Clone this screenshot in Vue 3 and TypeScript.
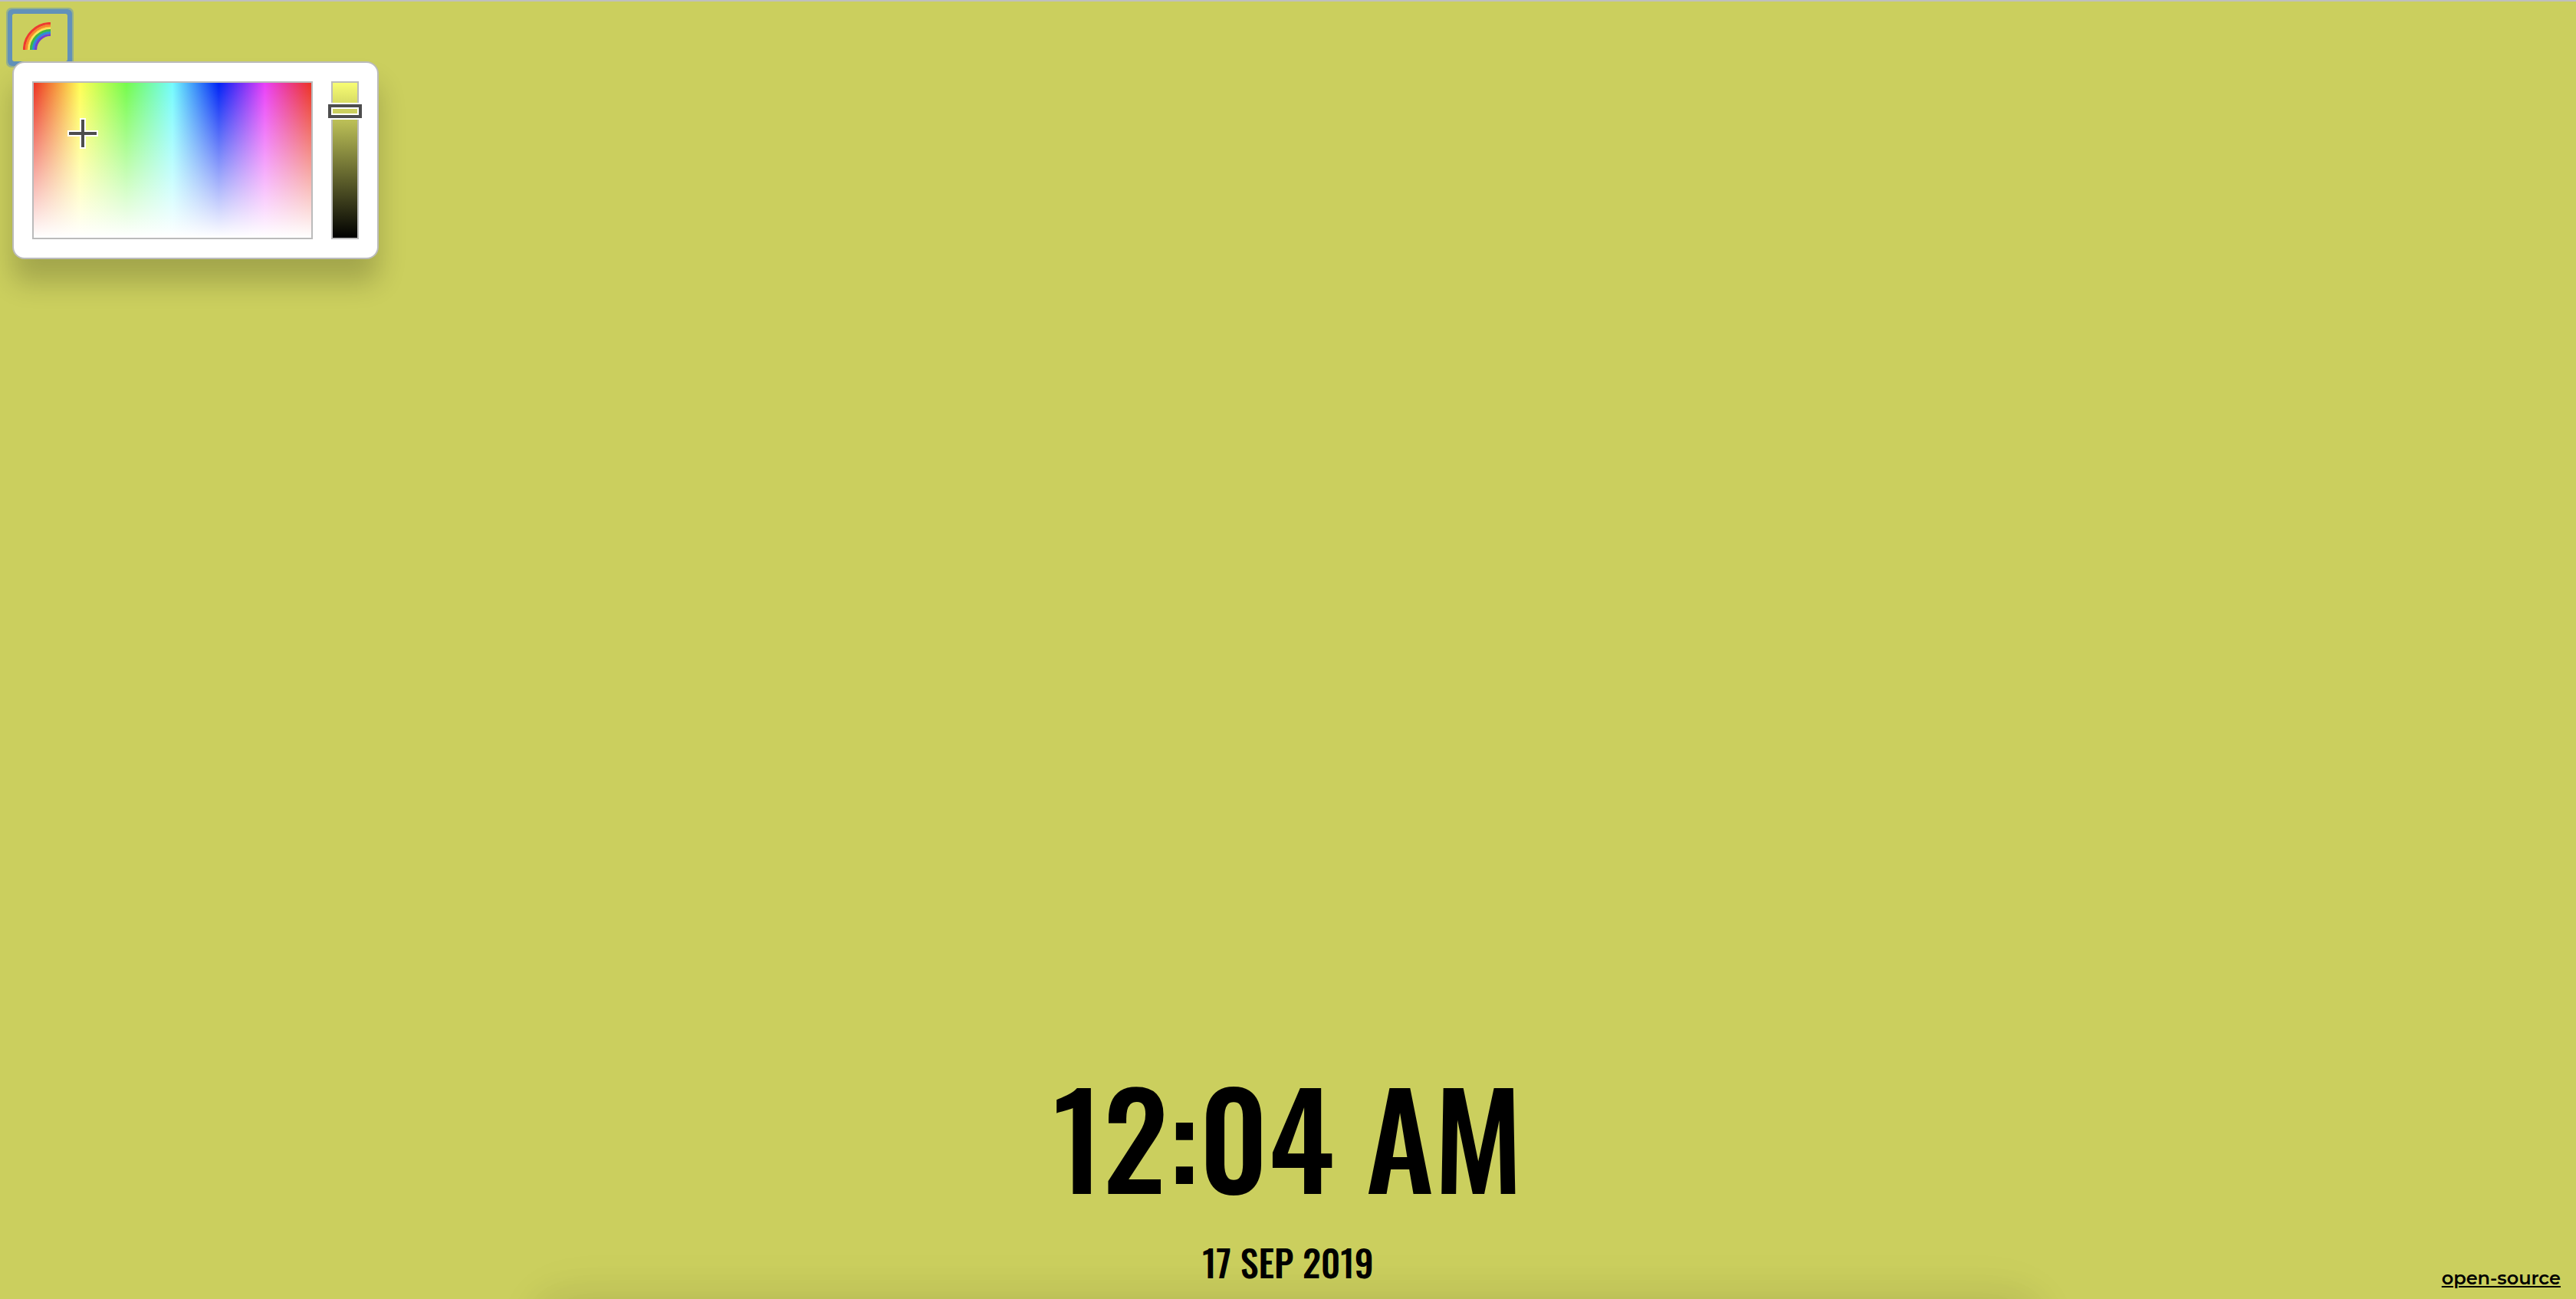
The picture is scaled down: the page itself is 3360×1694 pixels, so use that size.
<script setup lang="ts">
import { ref } from 'vue'

const time = ref('12:04 AM')
const date = ref('17 SEP 2019')
const brightness = ref(85)
const pickerOpen = ref(true)

const bands = [
  { r: 34.5, color: '#ee3a30' },
  { r: 31.5, color: '#f7852f' },
  { r: 28.5, color: '#fbe35c' },
  { r: 25.5, color: '#3fb540' },
  { r: 22.5, color: '#2f86e0' },
  { r: 19.5, color: '#7340cc' },
]
</script>

<template>
  <main class="page">
    <header class="toolbar">
      <button
        class="toggle"
        type="button"
        aria-label="Background colour"
        :aria-expanded="pickerOpen"
        @click="pickerOpen = !pickerOpen"
      >
        <svg class="rainbow" viewBox="0 0 36 36" aria-hidden="true">
          <circle
            v-for="band in bands"
            :key="band.r"
            cx="36"
            cy="36"
            :r="band.r"
            fill="none"
            :stroke="band.color"
            stroke-width="3.2"
          />
          <circle cx="36" cy="36" r="30" fill="none" stroke="#fbb534" stroke-width="1" />
          <circle cx="36" cy="36" r="24" fill="none" stroke="#2fa89a" stroke-width="1" />
        </svg>
      </button>

      <section v-if="pickerOpen" class="picker" aria-label="Colour picker">
        <div class="palette">
          <svg class="cross" viewBox="0 0 40 40" aria-hidden="true">
            <path d="M16 0h8v16h16v8H24v16h-8V24H0v-8h16z" fill="#fff" />
            <path d="M18 2h4v16h16v4H22v16h-4V22H2v-4h16z" fill="#4d4d4d" />
          </svg>
        </div>
        <div class="value">
          <input
            v-model.number="brightness"
            class="range"
            type="range"
            min="0"
            max="100"
            aria-label="Brightness"
          />
        </div>
      </section>
    </header>

    <footer class="bottom">
      <div class="clock">
        <h1 class="time">{{ time }}</h1>
        <p class="date">{{ date }}</p>
      </div>
      <a class="source" href="#source">open-source</a>
    </footer>
    <div class="shade"></div>
  </main>
</template>

<style>
body {
  background: #cbcf5e;
}
</style>

<style scoped>
.page {
  position: relative;
  box-sizing: border-box;
  display: flex;
  flex-direction: column;
  justify-content: space-between;
  min-height: 100vh;
  overflow: hidden;
  border-top: 2px solid #bfbfbf;
  background: #cbcf5e;
  color: #000;
}

.toolbar {
  position: relative;
  display: flex;
  padding: 16px;
}

.toggle {
  display: flex;
  align-items: flex-start;
  box-sizing: border-box;
  width: 72px;
  height: 62px;
  margin: 0;
  padding: 11px 14px;
  border: 0;
  border-radius: 2px;
  background: transparent;
  box-shadow:
    0 0 0 1px rgba(98, 145, 185, 0.6),
    0 0 0 6px #6291b9,
    0 0 0 8px rgba(98, 145, 185, 0.5);
}

.rainbow {
  display: block;
  width: 36px;
  height: 36px;
}

.picker {
  position: absolute;
  top: 78px;
  left: 16px;
  z-index: 2;
  display: flex;
  gap: 24px;
  padding: 24px;
  border: 2px solid #bbb;
  border-radius: 16px;
  background: #fff;
  box-shadow: 0 30px 36px rgba(0, 0, 0, 0.2);
}

.palette {
  position: relative;
  width: 362px;
  height: 202px;
  border: 2px solid #bbb;
  background:
    linear-gradient(to bottom, rgba(255, 255, 255, 0), #fff),
    linear-gradient(
      to right,
      #ec3323,
      #fffe54,
      #75fb4c,
      #73fbfd,
      #0023f5,
      #ea3ff7,
      #ec3323
    );
}

.cross {
  position: absolute;
  top: 46px;
  left: 44px;
  width: 40px;
  height: 40px;
}

.value {
  position: relative;
  width: 32px;
  height: 202px;
  border: 2px solid #bbb;
  background: linear-gradient(to bottom, #f8fd73, #000);
}

.range {
  position: absolute;
  top: 0;
  left: -6px;
  width: 44px;
  height: 202px;
  margin: 0;
  appearance: none;
  background: transparent;
  writing-mode: vertical-lr;
  direction: rtl;
}

.range::-webkit-slider-runnable-track {
  width: 44px;
  background: transparent;
}

.range::-webkit-slider-thumb {
  box-sizing: border-box;
  width: 44px;
  height: 18px;
  padding: 2px;
  appearance: none;
  border: 4px solid #4d4d4d;
  border-radius: 0;
  background: linear-gradient(#cbcf5e, #cbcf5e) content-box, #fff;
  box-shadow: 0 0 0 2px #fff;
}

.bottom {
  position: relative;
  z-index: 1;
  display: grid;
  grid-template-columns: 1fr auto 1fr;
  align-items: end;
  padding: 0 20px 12px;
}

.clock {
  grid-column: 2;
  font-family: Oswald, "Liberation Sans Narrow", "Liberation Sans", sans-serif;
  font-weight: 500;
  text-align: center;
}

.time {
  margin: 0 0 4px;
  font-size: 170px;
  font-weight: inherit;
  line-height: 252px;
}

.date {
  margin: 0;
  font-size: 48px;
  line-height: 72px;
}

.source {
  justify-self: end;
  color: #000;
  font-family: Montserrat, Inter, sans-serif;
  font-size: 24px;
  font-weight: 600;
  line-height: 30px;
  text-underline-offset: 2px;
  text-decoration-thickness: 2px;
}

.shade {
  position: absolute;
  top: 100%;
  right: 21%;
  left: 21%;
  height: 200px;
  border-radius: 20px;
  box-shadow:
    0 0 80px rgba(0, 0, 0, 0.06),
    0 0 50px rgba(0, 0, 0, 0.08);
}
</style>
